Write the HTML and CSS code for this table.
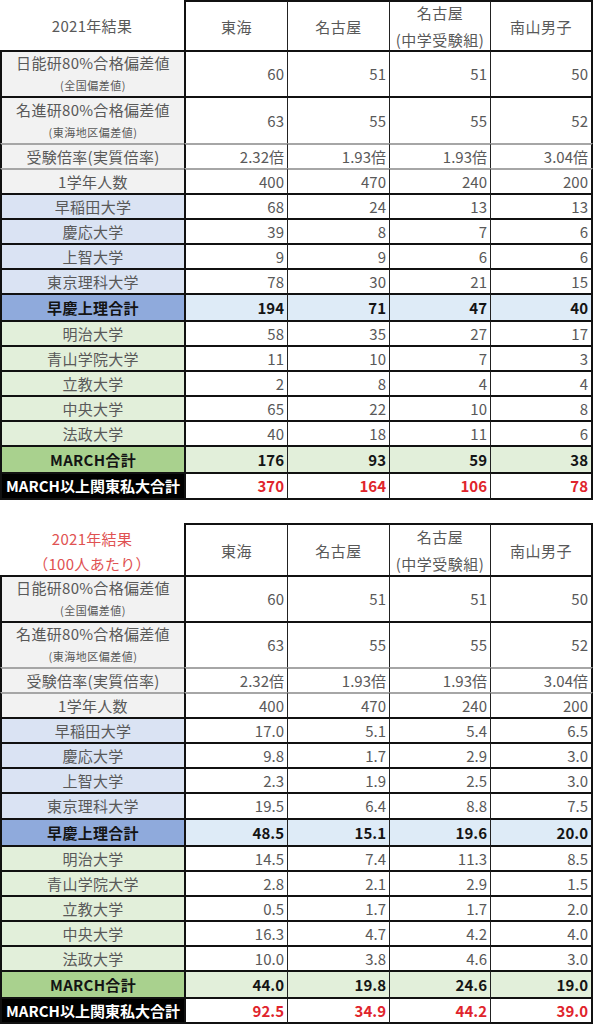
FILE: index.html
```html
<!DOCTYPE html>
<html lang="ja">
<head>
<meta charset="utf-8">
<title>2021年結果</title>
<link rel="stylesheet" href="styles.css">
</head>
<body>
<div class="sheet">
  <div class="tbl">
    <div class="row h-head">
      <div class="c lab headlab">2021年結果</div>
      <div class="c hd">東海</div>
      <div class="c hd">名古屋</div>
      <div class="c hd">名古屋<br>(中学受験組)</div>
      <div class="c hd">南山男子</div>
    </div>
    <div class="row h-tall">
      <div class="c lab gray"><span class="main">日能研80%合格偏差値</span><span class="sub">(全国偏差値)</span></div>
      <div class="c v">60</div><div class="c v">51</div><div class="c v">51</div><div class="c v">50</div>
    </div>
    <div class="row h-tall2">
      <div class="c lab gray"><span class="main">名進研80%合格偏差値</span><span class="sub">(東海地区偏差値)</span></div>
      <div class="c v">63</div><div class="c v">55</div><div class="c v">55</div><div class="c v">52</div>
    </div>
    <div class="row h-std soft">
      <div class="c lab gray">受験倍率(実質倍率)</div>
      <div class="c v">2.32倍</div><div class="c v">1.93倍</div><div class="c v">1.93倍</div><div class="c v">3.04倍</div>
    </div>
    <div class="row h-std soft">
      <div class="c lab gray">1学年人数</div>
      <div class="c v">400</div><div class="c v">470</div><div class="c v">240</div><div class="c v">200</div>
    </div>
    <div class="row h-std">
      <div class="c lab blue">早稲田大学</div>
      <div class="c v">68</div><div class="c v">24</div><div class="c v">13</div><div class="c v">13</div>
    </div>
    <div class="row h-std">
      <div class="c lab blue">慶応大学</div>
      <div class="c v">39</div><div class="c v">8</div><div class="c v">7</div><div class="c v">6</div>
    </div>
    <div class="row h-std">
      <div class="c lab blue">上智大学</div>
      <div class="c v">9</div><div class="c v">9</div><div class="c v">6</div><div class="c v">6</div>
    </div>
    <div class="row h-std">
      <div class="c lab blue">東京理科大学</div>
      <div class="c v">78</div><div class="c v">30</div><div class="c v">21</div><div class="c v">15</div>
    </div>
    <div class="row h-total total-blue">
      <div class="c lab">早慶上理合計</div>
      <div class="c v">194</div><div class="c v">71</div><div class="c v">47</div><div class="c v">40</div>
    </div>
    <div class="row h-std">
      <div class="c lab green">明治大学</div>
      <div class="c v">58</div><div class="c v">35</div><div class="c v">27</div><div class="c v">17</div>
    </div>
    <div class="row h-std">
      <div class="c lab green">青山学院大学</div>
      <div class="c v">11</div><div class="c v">10</div><div class="c v">7</div><div class="c v">3</div>
    </div>
    <div class="row h-std">
      <div class="c lab green">立教大学</div>
      <div class="c v">2</div><div class="c v">8</div><div class="c v">4</div><div class="c v">4</div>
    </div>
    <div class="row h-std">
      <div class="c lab green">中央大学</div>
      <div class="c v">65</div><div class="c v">22</div><div class="c v">10</div><div class="c v">8</div>
    </div>
    <div class="row h-std">
      <div class="c lab green">法政大学</div>
      <div class="c v">40</div><div class="c v">18</div><div class="c v">11</div><div class="c v">6</div>
    </div>
    <div class="row h-total total-green">
      <div class="c lab">MARCH合計</div>
      <div class="c v">176</div><div class="c v">93</div><div class="c v">59</div><div class="c v">38</div>
    </div>
    <div class="row h-last grand">
      <div class="c lab">MARCH以上関東私大合計</div>
      <div class="c v">370</div><div class="c v">164</div><div class="c v">106</div><div class="c v">78</div>
    </div>
  </div>

  <div class="tbl second">
    <div class="row h-head2">
      <div class="c lab headlab red-head"><span>2021年結果</span><span>（100人あたり）</span></div>
      <div class="c hd">東海</div>
      <div class="c hd">名古屋</div>
      <div class="c hd">名古屋<br>(中学受験組)</div>
      <div class="c hd">南山男子</div>
    </div>
    <div class="row h-tall">
      <div class="c lab gray"><span class="main">日能研80%合格偏差値</span><span class="sub">(全国偏差値)</span></div>
      <div class="c v">60</div><div class="c v">51</div><div class="c v">51</div><div class="c v">50</div>
    </div>
    <div class="row h-tall">
      <div class="c lab gray"><span class="main">名進研80%合格偏差値</span><span class="sub">(東海地区偏差値)</span></div>
      <div class="c v">63</div><div class="c v">55</div><div class="c v">55</div><div class="c v">52</div>
    </div>
    <div class="row h-std soft">
      <div class="c lab gray">受験倍率(実質倍率)</div>
      <div class="c v">2.32倍</div><div class="c v">1.93倍</div><div class="c v">1.93倍</div><div class="c v">3.04倍</div>
    </div>
    <div class="row h-std soft">
      <div class="c lab gray">1学年人数</div>
      <div class="c v">400</div><div class="c v">470</div><div class="c v">240</div><div class="c v">200</div>
    </div>
    <div class="row h-std">
      <div class="c lab blue">早稲田大学</div>
      <div class="c v">17.0</div><div class="c v">5.1</div><div class="c v">5.4</div><div class="c v">6.5</div>
    </div>
    <div class="row h-std">
      <div class="c lab blue">慶応大学</div>
      <div class="c v">9.8</div><div class="c v">1.7</div><div class="c v">2.9</div><div class="c v">3.0</div>
    </div>
    <div class="row h-std">
      <div class="c lab blue">上智大学</div>
      <div class="c v">2.3</div><div class="c v">1.9</div><div class="c v">2.5</div><div class="c v">3.0</div>
    </div>
    <div class="row h-std26">
      <div class="c lab blue">東京理科大学</div>
      <div class="c v">19.5</div><div class="c v">6.4</div><div class="c v">8.8</div><div class="c v">7.5</div>
    </div>
    <div class="row h-total total-blue">
      <div class="c lab">早慶上理合計</div>
      <div class="c v">48.5</div><div class="c v">15.1</div><div class="c v">19.6</div><div class="c v">20.0</div>
    </div>
    <div class="row h-std">
      <div class="c lab green">明治大学</div>
      <div class="c v">14.5</div><div class="c v">7.4</div><div class="c v">11.3</div><div class="c v">8.5</div>
    </div>
    <div class="row h-std">
      <div class="c lab green">青山学院大学</div>
      <div class="c v">2.8</div><div class="c v">2.1</div><div class="c v">2.9</div><div class="c v">1.5</div>
    </div>
    <div class="row h-std">
      <div class="c lab green">立教大学</div>
      <div class="c v">0.5</div><div class="c v">1.7</div><div class="c v">1.7</div><div class="c v">2.0</div>
    </div>
    <div class="row h-std">
      <div class="c lab green">中央大学</div>
      <div class="c v">16.3</div><div class="c v">4.7</div><div class="c v">4.2</div><div class="c v">4.0</div>
    </div>
    <div class="row h-std">
      <div class="c lab green">法政大学</div>
      <div class="c v">10.0</div><div class="c v">3.8</div><div class="c v">4.6</div><div class="c v">3.0</div>
    </div>
    <div class="row h-total total-green">
      <div class="c lab">MARCH合計</div>
      <div class="c v">44.0</div><div class="c v">19.8</div><div class="c v">24.6</div><div class="c v">19.0</div>
    </div>
    <div class="row h-last2 grand">
      <div class="c lab">MARCH以上関東私大合計</div>
      <div class="c v">92.5</div><div class="c v">34.9</div><div class="c v">44.2</div><div class="c v">39.0</div>
    </div>
  </div>
</div>
</body>
</html>
```

FILE: styles.css
```css
html, body {
  margin: 0;
  padding: 0;
  background: #ffffff;
}

.sheet {
  width: 593px;
  font-family: "Noto Sans CJK JP", "Noto Sans", sans-serif;
  color: #595959;
}

.tbl {
  display: flex;
  flex-direction: column;
}

.tbl.second {
  margin-top: 23px;
}

.row {
  display: flex;
}

.h-head { height: 50px; }
.h-head2 { height: 52px; }
.h-tall { height: 46px; }
.h-tall2 { height: 47px; }
.h-std { height: 25px; }
.h-std26 { height: 26px; }
.h-total { height: 27px; }
.h-last { height: 28px; }
.h-last2 { height: 27px; }

.c {
  box-sizing: border-box;
  border-top: 2px solid #111;
  border-left: 1px solid #222;
  display: flex;
  align-items: center;
  font-size: 15px;
  line-height: 20px;
  white-space: nowrap;
}

.c:nth-child(1) { width: 184px; border-left-width: 2px; border-left-color: #111; }
.c:nth-child(2) { width: 103px; border-left-width: 2px; border-left-color: #111; }
.c:nth-child(3) { width: 102px; }
.c:nth-child(4) { width: 101px; }
.c:nth-child(5) { width: 103px; border-right: 2px solid #111; }

.soft .c { border-top-color: #a6a6a6; }

.h-last .c, .h-last2 .c { border-bottom: 2px solid #111; }

/* label column */
.lab {
  justify-content: center;
  text-align: center;
  flex-direction: column;
  letter-spacing: 0.3px;
}

.lab .main {
  font-size: 15px;
  line-height: 22px;
}

.lab .sub {
  font-size: 11px;
  line-height: 22px;
  letter-spacing: 0.5px;
}

.headlab {
  border-top-color: transparent !important;
  border-left-color: transparent !important;
  border-left-width: 0 !important;
}

.red-head {
  color: #e05252;
  line-height: 25px;
  padding-top: 1px;
}

.hd {
  justify-content: center;
  text-align: center;
  line-height: 27px;
  letter-spacing: 0.5px;
}

.v {
  justify-content: flex-end;
  padding-right: 3px;
  font-size: 15px;
}

.gray { background: #f2f2f2; }
.blue { background: #dae3f3; }
.green { background: #e2efda; }

.total-blue .lab { background: #8faadc; }
.total-blue .v { background: #deebf7; }
.total-green .lab { background: #a9d18e; }
.total-green .v { background: #e2efda; }

.h-total .c {
  font-weight: 700;
  color: #141414;
  font-size: 15px;
}

.grand .lab {
  background: #000;
  color: #ffffff;
  font-weight: 700;
  font-size: 15px;
  letter-spacing: 0;
}

.grand .v {
  color: #e0242c;
  font-weight: 700;
  font-size: 15px;
}
```
